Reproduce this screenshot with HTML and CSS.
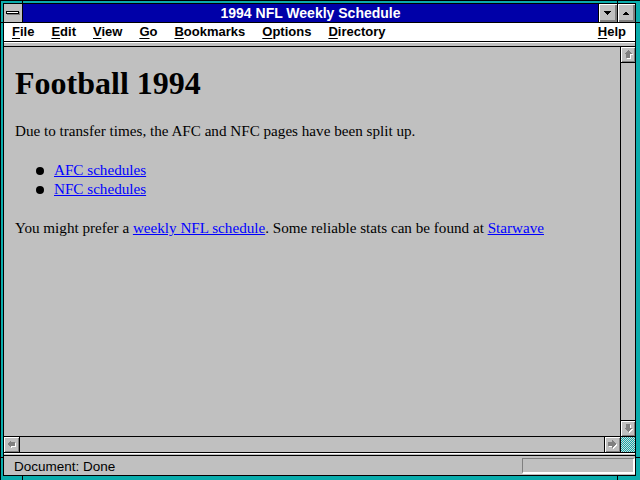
FILE: index.html
```html
<!DOCTYPE html>
<html>
<head>
<meta charset="utf-8">
<title>1994 NFL Weekly Schedule</title>
<link rel="stylesheet" href="styles.css">
</head>
<body>
<div class="window">
  <div class="titlebar">
    <div class="sysmenu"><span class="sysbar"></span></div>
    <div class="title">1994 NFL Weekly Schedule</div>
    <div class="tbtn min">
      <svg width="18" height="18" viewBox="0 0 18 18" shape-rendering="crispEdges"><polygon points="5,7 12,7 8.5,11" fill="#000"/></svg>
    </div>
    <div class="tbtn max">
      <svg width="17" height="18" viewBox="0 0 17 18" shape-rendering="crispEdges"><polygon points="4.5,11 11.5,11 8,7" fill="#000"/></svg>
    </div>
  </div>
  <div class="menubar">
    <span class="mi"><u>F</u>ile</span>
    <span class="mi"><u>E</u>dit</span>
    <span class="mi"><u>V</u>iew</span>
    <span class="mi"><u>G</u>o</span>
    <span class="mi"><u>B</u>ookmarks</span>
    <span class="mi"><u>O</u>ptions</span>
    <span class="mi"><u>D</u>irectory</span>
    <span class="mi help"><u>H</u>elp</span>
  </div>
  <div class="strip"></div>
  <div class="main">
    <div class="content">
      <h1>Football 1994</h1>
      <p class="intro">Due to transfer times, the AFC and NFC pages have been split up.</p>
      <ul class="links">
        <li><a href="#afc">AFC schedules</a></li>
        <li><a href="#nfc">NFC schedules</a></li>
      </ul>
      <p>You might prefer a <a href="#weekly">weekly NFL schedule</a>. Some reliable stats can be found at <a href="#starwave">Starwave</a></p>
    </div>
    <div class="vsb">
      <div class="sbtn vbtn up">
        <svg width="14" height="15" viewBox="0 0 14 15" shape-rendering="crispEdges">
          <polygon transform="translate(1,1)" points="7,3 11,7 9,7 9,11 5,11 5,7 3,7" fill="#fff"/>
          <polygon points="7,3 11,7 9,7 9,11 5,11 5,7 3,7" fill="#808080"/>
        </svg>
      </div>
      <div class="track"></div>
      <div class="sbtn vbtn down">
        <svg width="14" height="15" viewBox="0 0 14 15" shape-rendering="crispEdges">
          <polygon transform="translate(1,1)" points="5,3 9,3 9,7 11,7 7,11 3,7 5,7" fill="#fff"/>
          <polygon points="5,3 9,3 9,7 11,7 7,11 3,7 5,7" fill="#808080"/>
        </svg>
      </div>
    </div>
    <div class="hsb">
      <div class="sbtn hbtn left">
        <svg width="15" height="15" viewBox="0 0 15 15" shape-rendering="crispEdges">
          <polygon transform="translate(1,1)" points="3,7 7,3 7,5 11,5 11,9 7,9 7,11" fill="#fff"/>
          <polygon points="3,7 7,3 7,5 11,5 11,9 7,9 7,11" fill="#808080"/>
        </svg>
      </div>
      <div class="track"></div>
      <div class="sbtn hbtn right">
        <svg width="15" height="15" viewBox="0 0 15 15" shape-rendering="crispEdges">
          <polygon transform="translate(1,1)" points="11,7 7,3 7,5 3,5 3,9 7,9 7,11" fill="#fff"/>
          <polygon points="11,7 7,3 7,5 3,5 3,9 7,9 7,11" fill="#808080"/>
        </svg>
      </div>
    </div>
    <div class="corner"></div>
  </div>
  <div class="strip2"></div>
  <div class="statusbar">
    <span class="status-text">Document: Done</span>
    <div class="progress"></div>
  </div>
</div>
<div class="marks">
  <span class="mark v" style="left:22px;top:0;height:3px"></span>
  <span class="mark v" style="left:617px;top:0;height:3px"></span>
  <span class="mark v" style="left:22px;top:476px;height:4px"></span>
  <span class="mark v" style="left:617px;top:476px;height:4px"></span>
  <span class="mark h" style="left:0;top:22px;width:3px"></span>
  <span class="mark h" style="left:636px;top:22px;width:4px"></span>
  <span class="mark h" style="left:0;top:457px;width:3px"></span>
  <span class="mark h" style="left:636px;top:457px;width:4px"></span>
</div>
</body>
</html>
```
FILE: styles.css
```css
html, body {
  margin: 0;
  padding: 0;
  width: 640px;
  height: 480px;
  overflow: hidden;
  background: #0aacac;
}
body {
  box-sizing: border-box;
  border-top: 1px solid #000;
  border-left: 1px solid #000;
}
.window {
  margin: 2px 0 0 2px;
  width: 633px;
  height: 473px;
  box-sizing: border-box;
  border: 1px solid #000;
  background: #c0c0c0;
  display: flex;
  flex-direction: column;
}

/* title bar */
.titlebar {
  display: flex;
  height: 18px;
  border-bottom: 1px solid #000;
  flex: none;
}
.sysmenu {
  width: 18px;
  border-right: 1px solid #000;
  background: #c0c0c0;
  box-sizing: content-box;
}
.sysbar {
  display: block;
  margin: 7px 0 0 2px;
  width: 11px;
  height: 1px;
  background: #fff;
  border: 1px solid #000;
  box-shadow: 1px 1px 0 #808080;
}
.title {
  flex: 1;
  background: #0000a8;
  color: #fff;
  font-family: "Liberation Sans", Arial, sans-serif;
  font-weight: bold;
  font-size: 14px;
  line-height: 18px;
  text-align: center;
}
.tbtn {
  border-left: 1px solid #000;
  background: #c0c0c0;
  box-shadow: inset 1px 1px 0 #fff, inset -1px -1px 0 #808080, inset -2px -2px 0 #808080;
  height: 18px;
}
.tbtn svg { display: block; }
.tbtn.min { width: 18px; }
.tbtn.max { width: 17px; }

/* menu bar */
.menubar {
  display: flex;
  align-items: center;
  gap: 17px;
  height: 18px;
  padding-left: 8px;
  padding-right: 9px;
  background: #fff;
  border-bottom: 1px solid #000;
  flex: none;
  font-family: "Liberation Sans", Arial, sans-serif;
  font-weight: bold;
  font-size: 13px;
  line-height: 18px;
  color: #000;
}
.mi u { text-decoration: underline; text-underline-offset: 2px; }
.mi.help { margin-left: auto; }

.strip {
  flex: none;
  height: 3px;
  border-top: 1px solid #fff;
  border-bottom: 1px solid #000;
  background: #c0c0c0;
}

/* main area */
.main {
  flex: none;
  display: grid;
  grid-template-columns: 617px 14px;
  grid-template-rows: 390px 15px;
}
.content {
  box-sizing: border-box;
  border-right: 1px solid #000;
  border-bottom: 1px solid #000;
  padding: 18px 11px 0 11px;
  font-family: "Liberation Serif", "Times New Roman", serif;
  font-size: 15.15px;
  line-height: 19px;
  color: #000;
  overflow: hidden;
}
.content h1 {
  margin: 0 0 19px 0;
  font-size: 32px;
  line-height: 37px;
  font-weight: bold;
}
.content p { margin: 0; }
.content p.intro { margin-bottom: 20px; }
.links {
  list-style: none;
  margin: 0 0 20px 0;
  padding: 0 0 0 39px;
}
.links li::before {
  content: "";
  display: inline-block;
  width: 8px;
  height: 8px;
  border-radius: 50%;
  background: #000;
  margin-left: -18px;
  margin-right: 10px;
}
.content a {
  color: #0000ff;
  text-decoration: underline;
}

.vsb {
  display: flex;
  flex-direction: column;
  border-bottom: 1px solid #000;
  box-sizing: border-box;
}
.track { flex: 1; background: #c0c0c0; }
.sbtn {
  background: #c0c0c0;
  box-shadow: inset 1px 1px 0 #fff, inset -1px -1px 0 #808080;
  flex: none;
}
.sbtn svg { display: block; }
.vbtn { height: 15px; width: 14px; }
.vbtn.up { border-bottom: 1px solid #000; }
.vbtn.down { border-top: 1px solid #000; }

.hsb {
  display: flex;
  border-right: 1px solid #000;
}
.hbtn { width: 15px; height: 15px; }
.hbtn.left { border-right: 1px solid #000; }
.hbtn.right { border-left: 1px solid #000; }

.corner {
  background-color: #d8d8d8;
  background-image: repeating-conic-gradient(#0aacac 0 25%, #d8d8d8 0 50%);
  background-size: 2px 2px;
}

.strip2 {
  flex: none;
  height: 2px;
  border-top: 1px solid #000;
  box-shadow: inset 0 1px 0 #fff;
  border-bottom: 1px solid #000;
  background: #c0c0c0;
}

/* status bar */
.statusbar {
  flex: none;
  height: 18px;
  display: flex;
  align-items: flex-start;
  font-family: "Liberation Sans", Arial, sans-serif;
  font-size: 13.5px;
  line-height: 18px;
  color: #000;
}
.status-text { padding: 2px 0 0 10px; }
.progress {
  margin-left: auto;
  margin-top: 2px;
  width: 113px;
  height: 16px;
  box-sizing: border-box;
  border-top: 1px solid #808080;
  border-left: 1px solid #808080;
  border-bottom: 2px solid #fff;
  border-right: 2px solid #fff;
}

.marks {
  position: fixed;
  left: 0;
  top: 0;
  width: 640px;
  height: 480px;
  pointer-events: none;
}
.mark {
  position: absolute;
  background: #000;
}
.mark.v { width: 1px; }
.mark.h { height: 1px; }
```
